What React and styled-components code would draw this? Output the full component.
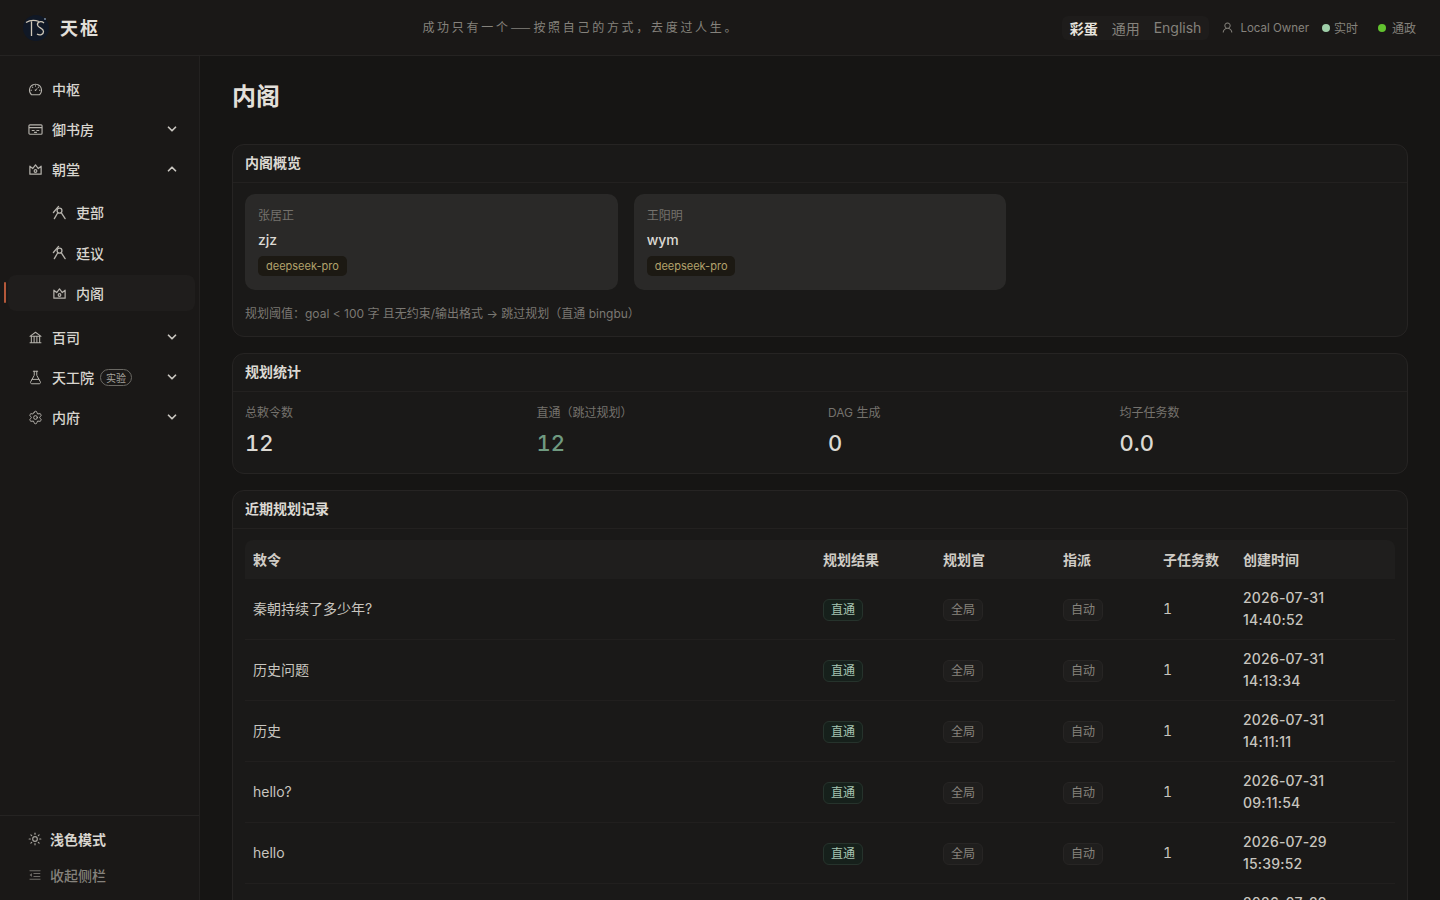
import styled, { createGlobalStyle } from "styled-components";
import { AiOutlineBank, AiOutlineDashboard, AiOutlineMenuFold, AiOutlineUser } from "react-icons/ai";
import { ChevronDown, ChevronUp, FlaskConical, Settings, Sun } from "lucide-react";

const GlobalStyle = createGlobalStyle`
  * {
    box-sizing: border-box;
  }
  html, body {
    margin: 0;
    height: 100%;
    overflow: hidden;
    background: #161514;
    color: #d8d5cf;
    font-family: Inter, "Noto Sans CJK SC", sans-serif;
    font-size: 14px;
  }
`;

const Shell = styled.div`
  height: 100vh;
  display: flex;
  flex-direction: column;
`;

const Header = styled.header`
  height: 56px;
  flex: none;
  display: flex;
  align-items: center;
  justify-content: space-between;
  padding: 0 24px 0 22px;
  background: #1a1817;
  border-bottom: 1px solid #252322;
`;

const Brand = styled.div`
  display: flex;
  align-items: center;
  gap: 10px;
  font-size: 18px;
  font-weight: 600;
  letter-spacing: 2px;
  color: #e2dfd9;
  span {
    margin-top: -1px;
  }
`;

const Motto = styled.div`
  font-size: 12px;
  letter-spacing: 2.7px;
  color: #85827c;
  padding-bottom: 2px;
  font-family: "Noto Sans CJK SC", sans-serif;
`;

const HeaderRight = styled.div`
  display: flex;
  align-items: center;
`;

const Segments = styled.div`
  display: flex;
  align-items: center;
  height: 24px;
  padding: 0 8px;
  gap: 14px;
  margin-right: 12px;
  background: #1e1c1b;
  border-radius: 6px;
`;

const Segment = styled.span`
  font-size: 14px;
  font-weight: ${(props) => (props.$active ? 700 : 400)};
  color: ${(props) => (props.$active ? "#e6e3dd" : "#85827c")};
`;

const Owner = styled.span`
  display: flex;
  align-items: center;
  gap: 6px;
  font-size: 11.5px;
  color: #85827c;
  margin-right: 13px;
  svg {
    font-size: 13px;
  }
`;

const Status = styled.span`
  display: flex;
  align-items: center;
  gap: ${(props) => props.$dotGap}px;
  font-size: 12px;
  color: #85827c;
  margin-left: ${(props) => props.$gap || 0}px;
`;

const Dot = styled.i`
  width: 8px;
  height: 8px;
  border-radius: 50%;
  background: ${(props) => props.$color};
`;

const Body = styled.div`
  flex: 1;
  min-height: 0;
  display: flex;
`;

const Sidebar = styled.aside`
  width: 200px;
  flex: none;
  display: flex;
  flex-direction: column;
  background: #1a1817;
  border-right: 1px solid #232120;
`;

const Nav = styled.nav`
  flex: 1;
  padding: 15px 4px 0 8px;
  display: flex;
  flex-direction: column;
  gap: 4px;
`;

const NavItem = styled.div`
  position: relative;
  height: 36px;
  flex: none;
  display: flex;
  align-items: center;
  gap: 9px;
  padding-left: ${(props) => (props.$sub ? 44 : 20)}px;
  padding-right: 16px;
  border-radius: 8px;
  font-weight: 500;
  color: #d8d5cf;
  background: ${(props) => (props.$active ? "#1f1d1c" : "transparent")};
  svg.lead {
    flex: none;
    width: 15px;
    height: 15px;
    color: #b5b2ac;
  }
  svg.arrow {
    margin-left: auto;
    color: #c9c6c0;
  }
`;

const Marker = styled.i`
  position: absolute;
  left: -4px;
  top: 7px;
  width: 2px;
  height: 21px;
  border-radius: 1px;
  background: #b4583a;
`;

const SubList = styled.div`
  display: flex;
  flex-direction: column;
  gap: 4.5px;
  padding: 3px 0 4px;
`;

const Beta = styled.span`
  height: 17px;
  padding: 0 5px;
  margin-left: -3px;
  display: inline-flex;
  align-items: center;
  border: 1px solid #6a6863;
  border-radius: 9px;
  font-size: 10px;
  font-weight: 400;
  color: #a5a29c;
`;

const SideFooter = styled.div`
  border-top: 1px solid #252322;
  padding: 5px 8px 7px;
  display: flex;
  flex-direction: column;
`;

const FootItem = styled.div`
  height: 36px;
  display: flex;
  align-items: center;
  gap: 8px;
  padding-left: 20px;
  font-weight: ${(props) => (props.$dim ? 500 : 600)};
  color: ${(props) => (props.$dim ? "#85827c" : "#d8d5cf")};
  svg {
    width: 14px;
    height: 14px;
    flex: none;
    color: ${(props) => (props.$dim ? "#6f6c67" : "#a5a29c")};
  }
`;

const Main = styled.main`
  flex: 1;
  min-width: 0;
  overflow: hidden;
  padding: 25px 32px 24px;
  background: #161514;
`;

const PageTitle = styled.h1`
  margin: 0 0 31px;
  font-size: 24px;
  line-height: 32px;
  font-weight: 600;
  color: #e2dfd9;
`;

const Card = styled.section`
  background: #1a1918;
  border: 1px solid #262423;
  border-radius: 12px;
  margin-bottom: 16px;
`;

const CardHead = styled.div`
  height: 38px;
  display: flex;
  align-items: center;
  padding: 0 12px 3px;
  border-bottom: 1px solid #232120;
  font-size: 14px;
  font-weight: 700;
  color: #dcd9d3;
`;

const CardBody = styled.div`
  padding: ${(props) => props.$top || 11}px 12px ${(props) => props.$bottom || 13}px;
`;

const AgentGrid = styled.div`
  display: grid;
  grid-template-columns: repeat(3, 1fr);
  gap: 16px;
`;

const Agent = styled.div`
  height: 96px;
  padding: 13px;
  border-radius: 10px;
  background: #2a2928;
`;

const AgentRole = styled.div`
  font-size: 12px;
  line-height: 18px;
  color: #75726d;
`;

const AgentName = styled.div`
  margin-top: 3px;
  font-size: 14px;
  line-height: 24px;
  font-weight: 500;
  color: #dcd9d3;
`;

const ModelTag = styled.span`
  display: inline-flex;
  align-items: center;
  height: 20px;
  margin-top: 4px;
  padding: 0 8px;
  border-radius: 5px;
  font-size: 11px;
  background: #1c1913;
  color: #b3a26c;
`;

const Note = styled.div`
  margin-top: 15px;
  font-size: 12px;
  line-height: 18px;
  color: #7b7873;
`;

const StatGrid = styled.div`
  display: grid;
  grid-template-columns: repeat(4, 1fr);
  gap: 16px;
`;

const StatLabel = styled.div`
  font-size: 12px;
  line-height: 18px;
  color: #75726d;
`;

const StatValue = styled.div`
  margin-top: 5px;
  font-size: 22px;
  line-height: 32px;
  font-weight: 500;
  font-variant-numeric: tabular-nums;
  color: ${(props) => props.$color || "#dcd9d3"};
`;

const Table = styled.table`
  width: 100%;
  table-layout: fixed;
  border-collapse: separate;
  border-spacing: 0;
`;

const Th = styled.th`
  width: ${(props) => props.$w}px;
  height: 39px;
  padding: 0 8px 2px;
  text-align: left;
  font-size: 14px;
  font-weight: 700;
  color: #cfccc6;
  background: #1f1e1d;
  &:first-child {
    border-top-left-radius: 8px;
  }
  &:last-child {
    border-top-right-radius: 8px;
  }
`;

const Td = styled.td`
  padding: 8px;
  font-size: 14px;
  line-height: 22px;
  color: #c8c5bf;
  border-bottom: 1px solid #211f1e;
`;

const Count = styled.span`
  font-variant-numeric: tabular-nums;
`;

const Badge = styled.span`
  display: inline-flex;
  align-items: center;
  height: 22px;
  padding: 0 7px;
  border-radius: 6px;
  font-size: 12px;
  background: ${(props) => (props.$green ? "#16201b" : "#1f1e1d")};
  border: 1px solid ${(props) => (props.$green ? "#26332c" : "#272524")};
  color: ${(props) => (props.$green ? "#a6c5b2" : "#87847e")};
`;

const TimeLine = styled.span`
  display: block;
  font-weight: 500;
  letter-spacing: 0.2px;
`;

// icons the packages have no close match for
const BookIcon = () => (
  <svg className="lead" viewBox="0 0 16 16" fill="none" stroke="currentColor" strokeWidth="1.2">
    <rect x="1" y="3" width="14" height="10" rx="1" />
    <path d="M1 6h14M4 9h3M9 9h3M6.5 11h3" />
  </svg>
);

const CrownIcon = () => (
  <svg className="lead" viewBox="0 0 16 16" fill="none" stroke="currentColor" strokeWidth="1.3" strokeLinejoin="round">
    <path d="M2 4.5l3 2.5 3-4 3 4 3-2.5V13H2z" />
    <circle cx="8" cy="9.6" r="1.4" />
  </svg>
);

const OfficerIcon = () => (
  <svg className="lead" viewBox="0 0 16 16" fill="none" stroke="currentColor" strokeWidth="1.4" strokeLinecap="round">
    <circle cx="8" cy="6" r="2.6" />
    <path d="M7 1.500L1.500 8M6 8.500L2.500 14.500M10 8.500l4 6" />
  </svg>
);

const Logo = () => (
  <svg width="28" height="28" viewBox="0 0 28 28">
    <circle cx="14" cy="14" r="13" fill="#101826" />
    <path d="M4 8.5C8 6 13 6 17 7.5M9.5 7.5V22" fill="none" stroke="#cfc7b8" strokeWidth="1.3" />
    <path d="M22 9c-3-2.500-7-1-6.500 2 .4 3 6 3 6 6.500 0 3-3.500 4.500-6.500 2.500" fill="none" stroke="#cfc7b8" strokeWidth="1.3" />
    <circle cx="23" cy="5" r="0.9" fill="#8296ad" />
  </svg>
);

const agents = [
  { role: "张居正", name: "zjz" },
  { role: "王阳明", name: "wym" },
];

const stats = [
  { label: "总敕令数", value: "12" },
  { label: "直通（跳过规划）", value: "12", color: "#6f9a80" },
  { label: "DAG 生成", value: "0" },
  { label: "均子任务数", value: "0.0" },
];

const columns = [
  { title: "敕令", w: 570 },
  { title: "规划结果", w: 120 },
  { title: "规划官", w: 120 },
  { title: "指派", w: 100 },
  { title: "子任务数", w: 80 },
  { title: "创建时间", w: 160 },
];

const records = [
  { goal: "秦朝持续了多少年?", date: "2026-07-31", time: "14:40:52" },
  { goal: "历史问题", date: "2026-07-31", time: "14:13:34" },
  { goal: "历史", date: "2026-07-31", time: "14:11:11" },
  { goal: "hello?", date: "2026-07-31", time: "09:11:54" },
  { goal: "hello", date: "2026-07-29", time: "15:39:52" },
  { goal: "hello", date: "2026-07-29", time: "15:31:08" },
];

const App = () => {
  return (
    <Shell>
      <GlobalStyle />
      <Header>
        <Brand>
          <Logo />
          <span>天枢</span>
        </Brand>
        <Motto>成功只有一个——按照自己的方式，去度过人生。</Motto>
        <HeaderRight>
          <Segments>
            <Segment $active>彩蛋</Segment>
            <Segment>通用</Segment>
            <Segment>English</Segment>
          </Segments>
          <Owner>
            <AiOutlineUser />
            Local Owner
          </Owner>
          <Status $dotGap={4}>
            <Dot $color="#9fcfa9" />
            实时
          </Status>
          <Status $gap={20} $dotGap={6}>
            <Dot $color="#62c22f" />
            通政
          </Status>
        </HeaderRight>
      </Header>
      <Body>
        <Sidebar>
          <Nav>
            <NavItem>
              <AiOutlineDashboard className="lead" />
              中枢
            </NavItem>
            <NavItem>
              <BookIcon />
              御书房
              <ChevronDown className="arrow" size={14} strokeWidth={3} />
            </NavItem>
            <NavItem>
              <CrownIcon />
              朝堂
              <ChevronUp className="arrow" size={14} strokeWidth={3} />
            </NavItem>
            <SubList>
              <NavItem $sub>
                <OfficerIcon />
                吏部
              </NavItem>
              <NavItem $sub>
                <OfficerIcon />
                廷议
              </NavItem>
              <NavItem $sub $active>
                <Marker />
                <CrownIcon />
                内阁
              </NavItem>
            </SubList>
            <NavItem>
              <AiOutlineBank className="lead" />
              百司
              <ChevronDown className="arrow" size={14} strokeWidth={3} />
            </NavItem>
            <NavItem>
              <FlaskConical className="lead" strokeWidth={1.6} />
              天工院
              <Beta>实验</Beta>
              <ChevronDown className="arrow" size={14} strokeWidth={3} />
            </NavItem>
            <NavItem>
              <Settings className="lead" strokeWidth={1.6} />
              内府
              <ChevronDown className="arrow" size={14} strokeWidth={3} />
            </NavItem>
          </Nav>
          <SideFooter>
            <FootItem>
              <Sun />
              浅色模式
            </FootItem>
            <FootItem $dim>
              <AiOutlineMenuFold />
              收起侧栏
            </FootItem>
          </SideFooter>
        </Sidebar>
        <Main>
          <PageTitle>内阁</PageTitle>
          <Card>
            <CardHead>内阁概览</CardHead>
            <CardBody $top={11} $bottom={13}>
              <AgentGrid>
                {agents.map((agent) => (
                  <Agent key={agent.name}>
                    <AgentRole>{agent.role}</AgentRole>
                    <AgentName>{agent.name}</AgentName>
                    <ModelTag>deepseek-pro</ModelTag>
                  </Agent>
                ))}
              </AgentGrid>
              <Note>规划阈值：goal &lt; 100 字 且无约束/输出格式 → 跳过规划（直通 bingbu）</Note>
            </CardBody>
          </Card>
          <Card>
            <CardHead>规划统计</CardHead>
            <CardBody $top={12} $bottom={14}>
              <StatGrid>
                {stats.map((stat) => (
                  <div key={stat.label}>
                    <StatLabel>{stat.label}</StatLabel>
                    <StatValue $color={stat.color}>{stat.value}</StatValue>
                  </div>
                ))}
              </StatGrid>
            </CardBody>
          </Card>
          <Card>
            <CardHead>近期规划记录</CardHead>
            <CardBody>
              <Table>
                <thead>
                  <tr>
                    {columns.map((col) => (
                      <Th key={col.title} $w={col.w}>
                        {col.title}
                      </Th>
                    ))}
                  </tr>
                </thead>
                <tbody>
                  {records.map((record) => (
                    <tr key={record.time}>
                      <Td>{record.goal}</Td>
                      <Td>
                        <Badge $green>直通</Badge>
                      </Td>
                      <Td>
                        <Badge>全局</Badge>
                      </Td>
                      <Td>
                        <Badge>自动</Badge>
                      </Td>
                      <Td>
                        <Count>1</Count>
                      </Td>
                      <Td>
                        <TimeLine>{record.date}</TimeLine>
                        <TimeLine>{record.time}</TimeLine>
                      </Td>
                    </tr>
                  ))}
                </tbody>
              </Table>
            </CardBody>
          </Card>
        </Main>
      </Body>
    </Shell>
  );
};

export default App;
